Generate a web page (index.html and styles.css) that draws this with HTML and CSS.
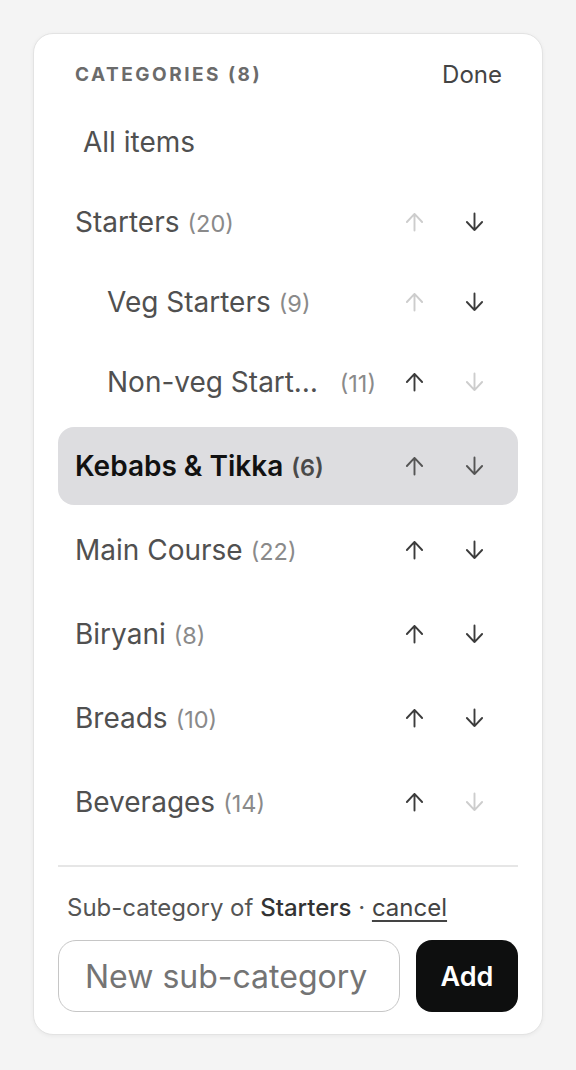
FILE: index.html
```html
<!DOCTYPE html>
<html lang="en">
<head>
<meta charset="utf-8">
<title>Categories</title>
<link rel="stylesheet" href="styles.css">
</head>
<body>
<div class="card">
  <div class="header">
    <span class="title">CATEGORIES (8)</span>
    <span class="done">Done</span>
  </div>
  <div class="list">
    <div class="row all"><span class="name">All items</span></div>

    <div class="row tight">
      <div class="label"><span class="name">Starters</span><span class="count">(20)</span></div>
      <div class="actions">
        <span class="btn off"><svg viewBox="0 0 20 20"><path d="M10 1.5V19M2 10L10 1.5L18 10"/></svg></span>
        <span class="btn"><svg viewBox="0 0 20 20"><path d="M10 18.5V1M2 10L10 18.5L18 10"/></svg></span>
      </div>
    </div>
    <div class="row tight sub">
      <div class="label"><span class="name">Veg Starters</span><span class="count">(9)</span></div>
      <div class="actions">
        <span class="btn off"><svg viewBox="0 0 20 20"><path d="M10 1.5V19M2 10L10 1.5L18 10"/></svg></span>
        <span class="btn"><svg viewBox="0 0 20 20"><path d="M10 18.5V1M2 10L10 18.5L18 10"/></svg></span>
      </div>
    </div>
    <div class="row tight sub">
      <div class="label"><span class="name trunc">Non-veg Starters</span><span class="count">(11)</span></div>
      <div class="actions">
        <span class="btn"><svg viewBox="0 0 20 20"><path d="M10 1.5V19M2 10L10 1.5L18 10"/></svg></span>
        <span class="btn off"><svg viewBox="0 0 20 20"><path d="M10 18.5V1M2 10L10 18.5L18 10"/></svg></span>
      </div>
    </div>

    <div class="row active">
      <div class="label"><span class="name">Kebabs &amp; Tikka</span><span class="count">(6)</span></div>
      <div class="actions">
        <span class="btn"><svg viewBox="0 0 20 20"><path d="M10 1.5V19M2 10L10 1.5L18 10"/></svg></span>
        <span class="btn"><svg viewBox="0 0 20 20"><path d="M10 18.5V1M2 10L10 18.5L18 10"/></svg></span>
      </div>
    </div>
    <div class="row">
      <div class="label"><span class="name">Main Course</span><span class="count">(22)</span></div>
      <div class="actions">
        <span class="btn"><svg viewBox="0 0 20 20"><path d="M10 1.5V19M2 10L10 1.5L18 10"/></svg></span>
        <span class="btn"><svg viewBox="0 0 20 20"><path d="M10 18.5V1M2 10L10 18.5L18 10"/></svg></span>
      </div>
    </div>
    <div class="row">
      <div class="label"><span class="name">Biryani</span><span class="count">(8)</span></div>
      <div class="actions">
        <span class="btn"><svg viewBox="0 0 20 20"><path d="M10 1.5V19M2 10L10 1.5L18 10"/></svg></span>
        <span class="btn"><svg viewBox="0 0 20 20"><path d="M10 18.5V1M2 10L10 18.5L18 10"/></svg></span>
      </div>
    </div>
    <div class="row">
      <div class="label"><span class="name">Breads</span><span class="count">(10)</span></div>
      <div class="actions">
        <span class="btn"><svg viewBox="0 0 20 20"><path d="M10 1.5V19M2 10L10 1.5L18 10"/></svg></span>
        <span class="btn"><svg viewBox="0 0 20 20"><path d="M10 18.5V1M2 10L10 18.5L18 10"/></svg></span>
      </div>
    </div>
    <div class="row">
      <div class="label"><span class="name">Beverages</span><span class="count">(14)</span></div>
      <div class="actions">
        <span class="btn"><svg viewBox="0 0 20 20"><path d="M10 1.5V19M2 10L10 1.5L18 10"/></svg></span>
        <span class="btn off"><svg viewBox="0 0 20 20"><path d="M10 18.5V1M2 10L10 18.5L18 10"/></svg></span>
      </div>
    </div>
  </div>

  <div class="divider"></div>

  <p class="subnote">Sub-category of <strong>Starters</strong> · <a class="cancel">cancel</a></p>
  <div class="form">
    <input class="input" type="text" placeholder="New sub-category">
    <button class="add">Add</button>
  </div>
</div>
</body>
</html>
```

FILE: styles.css
```css
* { box-sizing: border-box; }

html, body {
  margin: 0;
  background: #f4f4f4;
}

body {
  padding: 33px;
  font-family: Inter, "Noto Sans", "Liberation Sans", sans-serif;
  color: #4d4d4d;
}

.card {
  width: 510px;
  background: #ffffff;
  border: 1px solid #e3e3e3;
  border-radius: 20px;
  box-shadow: 0 1px 4px rgba(0, 0, 0, 0.05);
  padding: 24px 24px 22px;
}

.header {
  height: 32px;
  display: flex;
  align-items: center;
  justify-content: space-between;
  padding: 0 16px 0 17px;
  margin-bottom: 13px;
}

.title {
  font-size: 19px;
  font-weight: 700;
  letter-spacing: 2.5px;
  color: #6b6b6b;
}

.done {
  font-size: 24px;
  font-weight: 400;
  color: #444;
}

.list {
  display: flex;
  flex-direction: column;
}

.row {
  height: 78px;
  display: flex;
  align-items: center;
  padding: 0 22px 0 17px;
  border-radius: 16px;
  font-size: 28px;
  color: #505050;
}

.row + .row { margin-top: 6px; }
.row + .row.tight { margin-top: 2px; }

.row.all { padding-left: 25px; }
.row.sub { padding-left: 49px; }

.row.active {
  background: #dddde0;
  color: #111;
  font-weight: 600;
}

.label {
  flex: 1;
  min-width: 0;
  display: flex;
  align-items: baseline;
}

.name {
  white-space: nowrap;
}

.name.trunc {
  overflow: hidden;
  text-overflow: ellipsis;
  min-width: 0;
  margin-right: 12px;
}

.count {
  flex-shrink: 0;
  margin-left: 8px;
  font-size: 23.5px;
  color: #8a8a8a;
  font-weight: 400;
}

.row.active .count {
  color: #4a4a4a;
  font-weight: 600;
}

.actions {
  display: flex;
  gap: 16px;
  margin-left: 16px;
}

.btn {
  width: 44px;
  height: 44px;
  display: flex;
  align-items: center;
  justify-content: center;
  color: #3c3c3c;
}

.row.active .btn { color: #555; }

.btn.off { color: #cdcdcd; }

.btn svg {
  width: 19px;
  height: 20px;
  fill: none;
  stroke: currentColor;
  stroke-width: 2;
  stroke-linecap: round;
  stroke-linejoin: round;
}

.divider {
  height: 2px;
  background: #e6e6e6;
  margin-top: 24px;
}

.subnote {
  margin: 26px 0 0;
  padding-left: 9px;
  line-height: 30px;
  font-size: 24px;
  color: #555;
}

.subnote strong {
  font-weight: 500;
  color: #333;
}

.cancel {
  color: #444;
  text-decoration: underline;
  text-underline-offset: 4px;
}

.form {
  display: flex;
  gap: 16px;
  margin-top: 17px;
}

.input {
  flex: 1;
  min-width: 0;
  height: 72px;
  border: 1.5px solid #c6c6c6;
  border-radius: 18px;
  padding: 0 0 0 26px;
  font-family: inherit;
  font-size: 32px;
  color: #333;
  background: #fff;
  outline: none;
}

.input::placeholder { color: #747474; }

.add {
  width: 102px;
  height: 72px;
  border: none;
  border-radius: 16px;
  background: #0e0f0f;
  color: #fff;
  font-family: inherit;
  font-size: 27px;
  font-weight: 600;
}
```
